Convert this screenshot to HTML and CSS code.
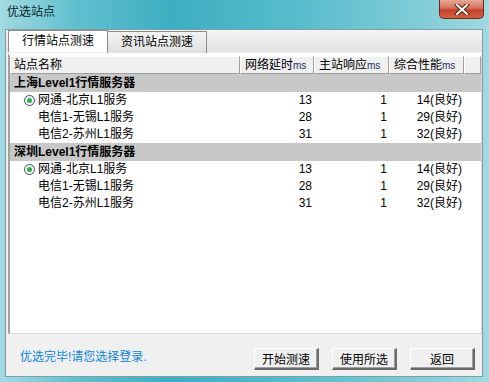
FILE: index.html
```html
<!DOCTYPE html>
<html>

<head>
    <title>优选站点</title>
    <link rel="stylesheet" href="styles.css">
</head>

<body>
    <div class="window">
        <div class="titlebar">
            <span class="title">优选站点</span>
            <div class="close">
                <svg width="16" height="11" viewBox="0 0 16 11">
                    <path d="M3 1 L13 10 M13 1 L3 10" stroke="#5a2418" stroke-width="4" stroke-linecap="square" />
                    <path d="M3 1 L13 10 M13 1 L3 10" stroke="#ffffff" stroke-width="2" stroke-linecap="square" />
                </svg>
            </div>
        </div>

        <div class="client">
            <div class="tabs">
                <div class="tab active">行情站点测速</div>
                <div class="tab">资讯站点测速</div>
            </div>

            <div class="list">
                <div class="head">
                    <div class="hc">站点名称</div>
                    <div class="hc">网络延时<span class="ms">ms</span></div>
                    <div class="hc">主站响应<span class="ms">ms</span></div>
                    <div class="hc">综合性能<span class="ms">ms</span></div>
                    <div class="hc"></div>
                </div>

                <div class="group">上海Level1行情服务器</div>
                <div class="row">
                    <div class="name"><span class="radio"></span>网通-北京L1服务</div>
                    <div class="num">13</div>
                    <div class="num">1</div>
                    <div class="num">14(良好)</div>
                </div>
                <div class="row">
                    <div class="name">电信1-无锡L1服务</div>
                    <div class="num">28</div>
                    <div class="num">1</div>
                    <div class="num">29(良好)</div>
                </div>
                <div class="row">
                    <div class="name">电信2-苏州L1服务</div>
                    <div class="num">31</div>
                    <div class="num">1</div>
                    <div class="num">32(良好)</div>
                </div>

                <div class="group">深圳Level1行情服务器</div>
                <div class="row">
                    <div class="name"><span class="radio"></span>网通-北京L1服务</div>
                    <div class="num">13</div>
                    <div class="num">1</div>
                    <div class="num">14(良好)</div>
                </div>
                <div class="row">
                    <div class="name">电信1-无锡L1服务</div>
                    <div class="num">28</div>
                    <div class="num">1</div>
                    <div class="num">29(良好)</div>
                </div>
                <div class="row">
                    <div class="name">电信2-苏州L1服务</div>
                    <div class="num">31</div>
                    <div class="num">1</div>
                    <div class="num">32(良好)</div>
                </div>
            </div>

            <div class="footer">
                <div class="status">优选完毕!请您选择登录.</div>
                <div class="buttons">
                    <button>开始测速</button>
                    <button>使用所选</button>
                    <button>返回</button>
                </div>
            </div>
        </div>
    </div>
</body>

</html>
```

FILE: styles.css
```css
/* 窗口整体 */
* {
    margin: 0;
    padding: 0;
    box-sizing: border-box;
}

body {
    width: 489px;
    height: 382px;
    overflow: hidden;
    font-family: "Liberation Sans", "Noto Sans CJK SC", sans-serif;
    font-size: 12px;
    color: #000;
}

.window {
    width: 489px;
    height: 382px;
    background: linear-gradient(90deg, #a3dae2 0%, #62c0cf 15%, #3daec1 35%, #56bccb 60%, #7fcbd6 85%, #a2d9e1 100%);
}

/* 标题栏 */
.titlebar {
    height: 29px;
    display: flex;
    justify-content: space-between;
    align-items: flex-start;
}

.titlebar .title {
    padding: 5px 0 0 7px;
    line-height: 14px;
    color: #061e28;
}

.close {
    width: 45px;
    height: 19px;
    margin-right: 5px;
    border: 1px solid #6b2a1f;
    border-top: none;
    border-radius: 0 0 5px 5px;
    background: linear-gradient(180deg, #e6a996 0%, #d7705a 45%, #c3412a 55%, #d4603f 100%);
    display: flex;
    align-items: center;
    justify-content: center;
}

/* 客户区 */
.client {
    margin-left: 5px;
    width: 478px;
    height: 348px;
    border: 1px solid #7f9ea8;
    background: #f0f0f0;
}

.tabs {
    height: 22px;
    padding-left: 2px;
    display: flex;
    background: linear-gradient(180deg, #f4f4f4 0%, #e2e2e2 100%);
}

.tab {
    width: 100px;
    height: 22px;
    margin-right: -1px;
    margin-top: 1px;
    border: 1px solid #8c8c8c;
    border-bottom: none;
    background: linear-gradient(180deg, #f3f3f3 0%, #e1e1e1 100%);
    text-align: center;
    line-height: 21px;
    font-size: 12px;
}

.tab.active {
    margin-top: 0;
    background: #fff;
    position: relative;
    z-index: 1;
}

/* 列表 */
.list {
    margin: 1px 0 0 2px;
    width: 474px;
    height: 281px;
    background: #fff;
    border-top: 3px solid #fff;
    border-left: 2px solid #a0a0a0;
    border-right: 1px solid #d8d8d8;
    border-bottom: 1px solid #d8d8d8;
    box-shadow: inset 0 1px 0 #a0a0a0;
}

.head {
    display: grid;
    grid-template-columns: 230px 74px 75px 75px 1fr;
    height: 18px;
    background: #f0f0f0;
}

.hc {
    border-top: 1px solid #fff;
    border-left: 1px solid #fff;
    border-right: 1px solid #a0a0a0;
    border-bottom: 1px solid #a0a0a0;
    line-height: 16px;
    padding-left: 4px;
    white-space: nowrap;
    overflow: hidden;
}

.hc:first-child {
    padding-left: 3px;
}

.hc .ms {
    font-size: 10px;
    color: #1a2a6a;
}

.group {
    height: 18px;
    line-height: 18px;
    padding-left: 4px;
    background: #c8c8c8;
    font-weight: bold;
}

.row {
    display: grid;
    grid-template-columns: 230px 74px 75px 75px 1fr;
    height: 17px;
    line-height: 17px;
}

.row .name {
    padding-left: 28px;
    position: relative;
}

.row .num {
    text-align: right;
    padding-right: 2px;
}

.radio {
    position: absolute;
    left: 14px;
    top: 3px;
    width: 11px;
    height: 11px;
    border: 1px solid #3d4f6a;
    border-radius: 50%;
    background: #f4f6f8;
}

.radio::after {
    content: "";
    position: absolute;
    left: 2px;
    top: 2px;
    width: 5px;
    height: 5px;
    border-radius: 50%;
    background: #2eb040;
}

/* 底部 */
.footer {
    display: flex;
    padding: 14px 7px 0 14px;
}

.status {
    flex: 1;
    padding-top: 2px;
    color: #0b84e6;
    line-height: 14px;
}

.buttons {
    display: flex;
    gap: 13px;
}

.buttons button {
    width: 65px;
    height: 22px;
    font-family: "Liberation Sans", "Noto Sans CJK SC", sans-serif;
    font-size: 12px;
    background: #f0f0f0;
    border-top: 1px solid #fff;
    border-left: 1px solid #fff;
    border-right: 2px solid #696969;
    border-bottom: 2px solid #696969;
    box-shadow: inset -1px -1px 0 #a0a0a0;
}
```
